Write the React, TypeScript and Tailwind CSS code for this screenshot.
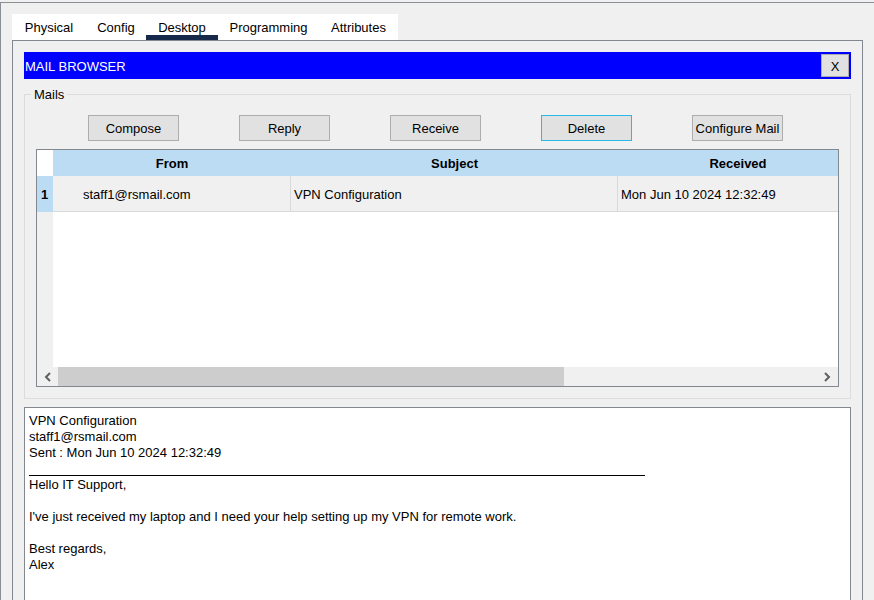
const tabs = [
  { label: 'Physical', w: 'w-[74px]' },
  { label: 'Config', w: 'w-[60px]' },
  { label: 'Desktop', w: 'w-[72px]', active: true },
  { label: 'Programming', w: 'w-[101px]' },
  { label: 'Attributes', w: 'w-[79px]' },
]

const buttons = ['Compose', 'Reply', 'Receive', 'Delete', 'Configure Mail']

function Tabs() {
  return (
    <div className="flex h-[26px] w-[386px] bg-white">
      {tabs.map((t) => (
        <div key={t.label} className={`relative ${t.w} h-[26px] pt-[6px] text-center`}>
          {t.label}
          {t.active && <span className="absolute bottom-0 left-0 right-0 h-[5px] bg-[#17294a]" />}
        </div>
      ))}
    </div>
  )
}

function ArrowLeft() {
  return (
    <svg width="8" height="10" viewBox="0 0 8 10">
      <path d="M6 1 L2 5 L6 9" fill="none" stroke="#606060" strokeWidth="2" />
    </svg>
  )
}

function ArrowRight() {
  return (
    <svg width="8" height="10" viewBox="0 0 8 10">
      <path d="M2 1 L6 5 L2 9" fill="none" stroke="#606060" strokeWidth="2" />
    </svg>
  )
}

function MailTable() {
  return (
    <div className="mt-[8px] flex h-[238px] w-[803px] flex-col border border-[#828790] bg-white">
      {/* header */}
      <div className="flex h-[26px] shrink-0">
        <div className="w-[16px] shrink-0 bg-white" />
        <div className="flex flex-1 overflow-hidden bg-[#bcdcf4] pt-[2px] font-bold">
          <div className="flex w-[238px] shrink-0 items-center justify-center">From</div>
          <div className="flex w-[327px] shrink-0 items-center justify-center">Subject</div>
          <div className="flex w-[240px] shrink-0 items-center justify-center">Received</div>
        </div>
      </div>
      {/* row 1 */}
      <div className="flex h-[36px] shrink-0">
        <div className="flex w-[16px] shrink-0 items-center bg-[#bcdcf4] pl-[4px] pt-[2px] font-bold">1</div>
        <div className="flex flex-1 overflow-hidden border-b border-[#d9d9d9] bg-[#f0f0f0]">
          <div className="flex w-[238px] shrink-0 items-center border-r border-[#d9d9d9] pl-[30px] pt-[2px]">staff1@rsmail.com</div>
          <div className="flex w-[327px] shrink-0 items-center border-r border-[#d9d9d9] pl-[3px] pt-[2px]">VPN Configuration</div>
          <div className="flex w-[240px] shrink-0 items-center pl-[3px] pt-[2px]">Mon Jun 10 2024 12:32:49</div>
        </div>
      </div>
      {/* empty area */}
      <div className="flex flex-1">
        <div className="w-[16px] shrink-0 bg-[#f0f0f0]" />
        <div className="flex-1 bg-white" />
      </div>
      {/* horizontal scrollbar */}
      <div className="flex h-[19px] shrink-0 items-center bg-[#f0f0f0]">
        <div className="flex h-full w-[21px] shrink-0 items-center justify-center pl-[1px]">
          <ArrowLeft />
        </div>
        <div className="h-full w-[506px] bg-[#cdcdcd]" />
        <div className="flex-1" />
        <div className="flex h-full w-[21px] shrink-0 items-center justify-center pr-[1px]">
          <ArrowRight />
        </div>
      </div>
    </div>
  )
}

export default function App() {
  return (
    <div className="h-[600px] w-[874px] overflow-hidden bg-[#f0f0f0] pt-[2px] font-['Liberation_Sans',Arial,sans-serif] text-[13px] leading-[16px] text-black">
      <div className="h-[598px] border-l border-t border-[#8a8f97] pl-[11px] pt-[11px]">
        <Tabs />
        <div className="h-[600px] w-[851px] border border-[#828790] px-[11px] pt-[11px]">
          {/* title bar */}
          <div className="flex h-[27px] items-center justify-between bg-[#0000ff] pl-[1px] pr-[2px] text-white">
            <span className="pt-[2px]">MAIL BROWSER</span>
            <div className="flex h-[23px] w-[28px] items-center justify-center border border-[#adadad] bg-[#e1e1e1] pt-[2px] text-black">
              X
            </div>
          </div>

          {/* Mails group */}
          <div className="relative mt-[15px] border border-[#dcdcdc] px-[11px] pb-[11px] pt-[20px]">
            <span className="absolute left-[6px] top-[-8px] bg-[#f0f0f0] px-[3px]">Mails</span>
            <div className="flex gap-[60px] pl-[52px]">
              {buttons.map((b) => (
                <div
                  key={b}
                  className={`flex h-[26px] w-[91px] items-center justify-center border bg-[#e1e1e1] pt-[2px] ${
                    b === 'Delete' ? 'border-[#2ab8e6]' : 'border-[#adadad]'
                  }`}
                >
                  {b}
                </div>
              ))}
            </div>
            <MailTable />
          </div>

          {/* message body */}
          <div className="mt-[8px] h-[300px] w-[827px] border border-[#828790] bg-white pl-[4px] pt-[5px]">
            <div>VPN Configuration</div>
            <div>staff1@rsmail.com</div>
            <div>Sent : Mon Jun 10 2024 12:32:49</div>
            <div className="h-[14px]" />
            <div className="h-px w-[616px] bg-black" />
            <div className="mt-[1px]">Hello IT Support,</div>
            <div className="h-[16px]" />
            <div>I've just received my laptop and I need your help setting up my VPN for remote work.</div>
            <div className="h-[16px]" />
            <div>Best regards,</div>
            <div>Alex</div>
          </div>
        </div>
      </div>
    </div>
  )
}
